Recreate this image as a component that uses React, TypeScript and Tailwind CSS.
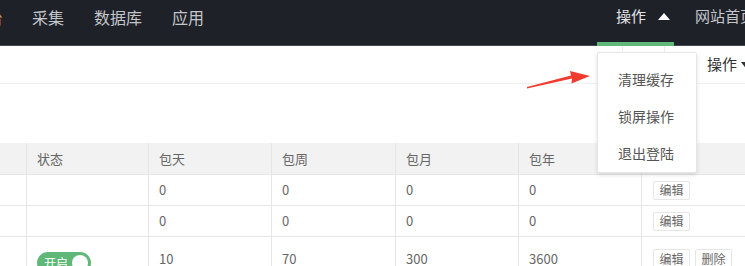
import React from 'react';

const cols = ['w-[27px]', 'w-[122px]', 'w-[123px]', 'w-[124px]', 'w-[123px]', 'w-[123px]'];

const rows = [
  { on: false, vals: ['0', '0', '0', '0'], del: false },
  { on: false, vals: ['0', '0', '0', '0'], del: false },
  { on: true, vals: ['10', '70', '300', '3600'], del: true },
];

function Btn({ label }: { label: string }) {
  return (
    <span className="inline-flex items-center justify-center h-[19px] w-[37px] border border-[#e6e6e6] rounded-[2px] bg-white text-[12px] text-[#666]">
      {label}
    </span>
  );
}

export default function App() {
  return (
    <div
      className="relative w-[745px] h-[266px] overflow-hidden bg-white"
      style={{ fontFamily: '"Noto Sans CJK SC", "Noto Sans", sans-serif' }}
    >
      {/* top header */}
      <div className="h-[46px] bg-[#1f2129] border-b border-[#454952] flex items-stretch text-[16px] text-[#c4c6ca] whitespace-nowrap">
        <div className="flex items-center -ml-[13px] pb-[12px]">
          <span className="text-[#d9a066]">台</span>
          <span className="ml-[29px]">采集</span>
          <span className="ml-[30px]">数据库</span>
          <span className="ml-[30px]">应用</span>
        </div>
        <div className="flex-1" />
        <div className="relative w-[77px] flex items-center pl-[19px] pb-[12px] text-[15px] text-[#e4e5e7]">
          操作
          <svg className="ml-[12px]" width="12" height="7" viewBox="0 0 12 7">
            <path d="M0 7 L6 0 L12 7 Z" fill="#fff" />
          </svg>
          <div className="absolute left-0 right-0 bottom-[-1px] h-[4px] bg-[#5fb878]" />
        </div>
        <div className="w-[50px] ml-[21px] flex items-center pb-[12px] text-[15px] overflow-hidden">网站首页</div>
      </div>

      {/* tabs bar */}
      <div className="h-[38px] border-b border-[#f0f0f0] flex text-[15px] text-[#333] whitespace-nowrap">
        <div className="flex-1" />
        <div className="w-[43px] border-l border-r border-[#eeeeee]" />
        <div className="w-[80px] flex items-center pl-[42px]">
          操作
          <svg className="ml-[4px] shrink-0" width="9" height="6" viewBox="0 0 9 6">
            <path d="M0 0 L9 0 L4.5 6 Z" fill="#333" />
          </svg>
        </div>
      </div>

      <div className="h-[59px]" />

      {/* table */}
      <div className="text-[13px] text-[#666] whitespace-nowrap">
        <div className="flex h-[32px] bg-[#f2f2f2] border-b border-[#e6e6e6]">
          {['', '状态', '包天', '包周', '包月', '包年'].map((h, i) => (
            <div key={i} className={`${cols[i]} shrink-0 border-r border-[#e6e6e6] flex items-center pl-[10px]`}>
              {h}
            </div>
          ))}
          <div className="flex-1" />
        </div>
        {rows.map((r, ri) => (
          <div key={ri} className="flex h-[31px] border-b border-[#e6e6e6]">
            <div className={`${cols[0]} shrink-0 border-r border-[#e6e6e6]`} />
            <div className={`${cols[1]} shrink-0 border-r border-[#e6e6e6] flex items-start pl-[10px]`}>
              {r.on && (
                <span className="relative mt-[15px] h-[22px] w-[54px] shrink-0 rounded-full bg-[#5fb878] text-white text-[12px] flex items-center pl-[7px]">
                  开启
                  <span className="absolute right-[3px] top-[3px] h-[16px] w-[16px] rounded-full bg-white" />
                </span>
              )}
            </div>
            {r.vals.map((v, vi) => (
              <div key={vi} className={`${cols[vi + 2]} shrink-0 border-r border-[#e6e6e6] flex pl-[10px] ${r.on ? 'items-start pt-[12px]' : 'items-center'}`}>
                {v}
              </div>
            ))}
            <div className={`flex-1 flex gap-[5px] pl-[11px] ${r.on ? 'items-start pt-[12px]' : 'items-center'}`}>
              <Btn label="编辑" />
              {r.del && <Btn label="删除" />}
            </div>
          </div>
        ))}
      </div>

      {/* dropdown menu */}
      <div className="absolute left-[597px] top-[52px] w-[100px] h-[121px] bg-white border border-[#e6e6e6] rounded-[2px] shadow-[0_2px_4px_rgba(0,0,0,0.12)] flex flex-col pt-[8px] text-[14px] text-[#555]">
        {['清理缓存', '锁屏操作', '退出登陆'].map((t) => (
          <div key={t} className="h-[37.5px] flex items-center pl-[20px]">
            {t}
          </div>
        ))}
      </div>

      {/* red annotation arrow */}
      <svg className="absolute left-[524px] top-[66px]" width="70" height="26" viewBox="0 0 70 26">
        <path d="M3 22.5 L48 12.5 L47.5 17.5 L66 10 L46 5 L47 9.5 L3 21 Z" fill="#f23a2e" />
      </svg>
    </div>
  );
}
